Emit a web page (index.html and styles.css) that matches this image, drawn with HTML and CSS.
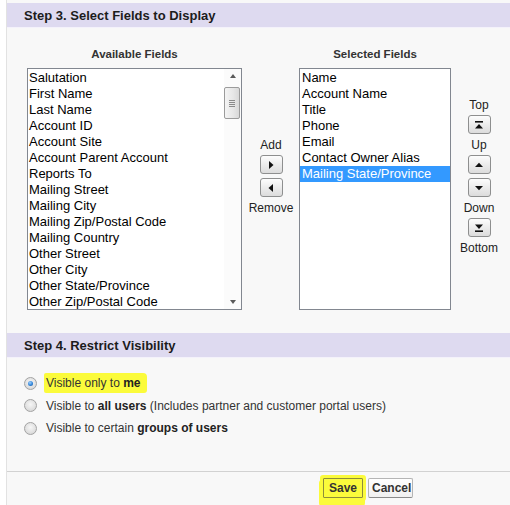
FILE: index.html
```html
<!DOCTYPE html>
<html>
<head>
<meta charset="utf-8">
<link rel="stylesheet" href="styles.css">
</head>
<body>
<div class="page">
  <div class="section-head">Step 3. Select Fields to Display</div>
  <div class="fields">
    <div class="list-col list-col-avail">
      <div class="col-label">Available Fields</div>
      <div class="listbox">
        <ul class="options">
          <li>Salutation</li>
          <li>First Name</li>
          <li>Last Name</li>
          <li>Account ID</li>
          <li>Account Site</li>
          <li>Account Parent Account</li>
          <li>Reports To</li>
          <li>Mailing Street</li>
          <li>Mailing City</li>
          <li>Mailing Zip/Postal Code</li>
          <li>Mailing Country</li>
          <li>Other Street</li>
          <li>Other City</li>
          <li>Other State/Province</li>
          <li>Other Zip/Postal Code</li>
        </ul>
        <div class="scrollbar">
          <span class="sb-btn"><span class="sb-arrow-up"></span></span>
          <span class="sb-thumb"><span class="grip"></span></span>
          <span class="sb-track"></span>
          <span class="sb-btn"><span class="sb-arrow-down"></span></span>
        </div>
      </div>
    </div>
    <div class="move-col">
      <div class="ctl-label">Add</div>
      <button class="arrow-btn after-label"><svg width="10" height="10" viewBox="0 0 10 10"><polygon points="3,1 7.5,5 3,9"/></svg></button>
      <button class="arrow-btn after-btn"><svg width="10" height="10" viewBox="0 0 10 10"><polygon points="7,1 2.5,5 7,9"/></svg></button>
      <div class="ctl-label after-btn-label">Remove</div>
    </div>
    <div class="list-col list-col-sel">
      <div class="col-label">Selected Fields</div>
      <div class="listbox">
        <ul class="options options-sel">
          <li>Name</li>
          <li>Account Name</li>
          <li>Title</li>
          <li>Phone</li>
          <li>Email</li>
          <li>Contact Owner Alias</li>
          <li class="selected">Mailing State/Province</li>
        </ul>
      </div>
    </div>
    <div class="order-col">
      <div class="ctl-label">Top</div>
      <button class="arrow-btn after-label"><svg width="10" height="10" viewBox="0 0 10 10"><rect x="1" y="1" width="8" height="1.6"/><polygon points="1,8.5 5,4 9,8.5"/></svg></button>
      <div class="ctl-label after-btn-label">Up</div>
      <button class="arrow-btn after-label"><svg width="10" height="10" viewBox="0 0 10 10"><polygon points="1,7 5,2.8 9,7"/></svg></button>
      <button class="arrow-btn after-btn"><svg width="10" height="10" viewBox="0 0 10 10"><polygon points="1,3 5,7.2 9,3"/></svg></button>
      <div class="ctl-label after-btn-label">Down</div>
      <button class="arrow-btn after-label"><svg width="10" height="10" viewBox="0 0 10 10"><polygon points="1,1.5 5,6 9,1.5"/><rect x="1" y="7.4" width="8" height="1.6"/></svg></button>
      <div class="ctl-label after-btn-label">Bottom</div>
    </div>
  </div>
  <div class="section-head">Step 4. Restrict Visibility</div>
  <div class="visibility">
    <label class="radio-row"><span class="radio checked"></span><span class="highlight">Visible only to <b>me</b></span></label>
    <label class="radio-row"><span class="radio"></span><span>Visible to <b>all users</b> (Includes partner and customer portal users)</span></label>
    <label class="radio-row"><span class="radio"></span><span>Visible to certain <b>groups of users</b></span></label>
  </div>
  <div class="footer">
    <button class="btn btn-save">Save</button>
    <button class="btn btn-cancel">Cancel</button>
  </div>
</div>
</body>
</html>
```

FILE: styles.css
```css
html, body {
  margin: 0;
  padding: 0;
  background: #ffffff;
}

body {
  font-family: "Liberation Sans", Arial, sans-serif;
  color: #222;
  width: 510px;
  height: 505px;
  overflow: hidden;
}

.page {
  margin-left: 6px;
  border-left: 1px solid #e2e2e2;
  background: #f8f8f8;
  height: 505px;
  padding-top: 3px;
  box-sizing: border-box;
}

.section-head {
  height: 24px;
  line-height: 25px;
  background: #dedaf0;
  padding-left: 17px;
  font-size: 13px;
  font-weight: bold;
  color: #1c1c1c;
  border-bottom: 1px solid #f4f2fb;
}

.fields {
  display: flex;
  align-items: flex-start;
  padding: 19px 0 23px 20px;
}

.list-col {
  display: flex;
  flex-direction: column;
  align-items: center;
}

.list-col-avail { width: 215px; }
.list-col-sel { width: 152px; }

.col-label {
  font-size: 11.5px;
  font-weight: bold;
  line-height: 14px;
  color: #333;
  margin-bottom: 7px;
}

.listbox {
  width: 100%;
  height: 242px;
  box-sizing: border-box;
  border: 1px solid #828790;
  background: #ffffff;
  display: flex;
}

.options {
  list-style: none;
  margin: 0;
  padding: 1px 0 0 1px;
  flex: 1;
  font-size: 13px;
  line-height: 16px;
  color: #000;
  white-space: nowrap;
  overflow: hidden;
}

.options-sel {
  padding-left: 0;
}

.options-sel li {
  padding-left: 2px;
}

.options .selected {
  background: #3399ff;
  color: #ffffff;
}

.scrollbar {
  width: 17px;
  display: flex;
  flex-direction: column;
  background: #fbfbfb;
}

.sb-btn {
  height: 17px;
  display: flex;
  align-items: center;
  justify-content: center;
}

.sb-arrow-up {
  width: 0;
  height: 0;
  border-left: 3.5px solid transparent;
  border-right: 3.5px solid transparent;
  border-bottom: 4px solid #5a5a5a;
  margin-top: -3px;
}

.sb-arrow-down {
  width: 0;
  height: 0;
  border-left: 3.5px solid transparent;
  border-right: 3.5px solid transparent;
  border-top: 4px solid #5a5a5a;
  margin-top: 2px;
}

.sb-thumb {
  height: 32px;
  margin: 1px 1px 0 0;
  box-sizing: border-box;
  border: 1px solid #9b9b9b;
  border-radius: 2px;
  background: linear-gradient(to right, #f4f4f4, #e6e6e6 60%, #d8d8d8);
  display: flex;
  align-items: center;
  justify-content: center;
}

.grip {
  width: 6px;
  height: 7px;
  background: repeating-linear-gradient(to bottom, #8a8a8a 0, #8a8a8a 1px, transparent 1px, transparent 2px);
}

.sb-track {
  flex: 1;
}

.move-col {
  width: 56px;
  display: flex;
  flex-direction: column;
  align-items: center;
  padding-top: 91px;
  padding-left: 1px;
}

.order-col {
  width: 56px;
  display: flex;
  flex-direction: column;
  align-items: center;
  padding-top: 51px;
}

.ctl-label {
  font-size: 12px;
  line-height: 14px;
  color: #222;
}

.arrow-btn {
  width: 23px;
  height: 19px;
  padding: 0;
  box-sizing: border-box;
  border: 1px solid #8e8f8f;
  border-radius: 3px;
  background: linear-gradient(#fdfdfd, #ececec 50%, #dcdcdc);
  display: flex;
  align-items: center;
  justify-content: center;
}

.arrow-btn svg {
  fill: #111;
  display: block;
}

.after-label { margin-top: 3px; }
.after-btn { margin-top: 4px; }
.after-btn-label { margin-top: 4px; }

.visibility {
  height: 114px;
  box-sizing: border-box;
  padding: 14px 0 0 17px;
  border-bottom: 1px solid #d2d2d2;
}

.radio-row {
  display: flex;
  align-items: center;
  height: 22.5px;
  font-size: 12px;
  color: #333;
}

.radio-row b {
  color: #222;
}

.radio {
  width: 13px;
  height: 13px;
  box-sizing: border-box;
  border-radius: 50%;
  border: 1px solid #a3a3a3;
  background: radial-gradient(circle at 50% 40%, #f6f6f6 0, #e2e2e2 55%, #cfcfcf 100%);
  margin-right: 9px;
  display: flex;
  align-items: center;
  justify-content: center;
}

.radio.checked::after {
  content: "";
  width: 5px;
  height: 5px;
  border-radius: 50%;
  background: radial-gradient(circle at 40% 35%, #9fd0ff 0, #2a7fd4 60%, #1a4f8c 100%);
}

.highlight {
  background: #fbfb3b;
  padding: 3px 6px 3px 2px;
  margin-left: -2px;
  border-radius: 2px 4px 3px 2px;
}

.footer {
  display: flex;
  gap: 5px;
  padding: 6px 0 0 316px;
}

.btn {
  height: 20px;
  padding: 0 3px;
  box-sizing: border-box;
  font-family: "Liberation Sans", Arial, sans-serif;
  font-size: 12px;
  font-weight: bold;
  color: #333;
  border: 1px solid #b5b5b5;
  border-bottom-color: #8a8a8a;
  border-radius: 2px;
  background: linear-gradient(#ffffff, #f0f0f0);
}

.btn-cancel {
  width: 45px;
}

.btn-save {
  width: 40px;
  background: #fbfb3b;
  border-color: #8d8d3a;
  box-shadow: 0 0 0 3px #fbfb3b, -1px 5px 0 3px #fbfb3b;
  border-radius: 1px;
}
```
